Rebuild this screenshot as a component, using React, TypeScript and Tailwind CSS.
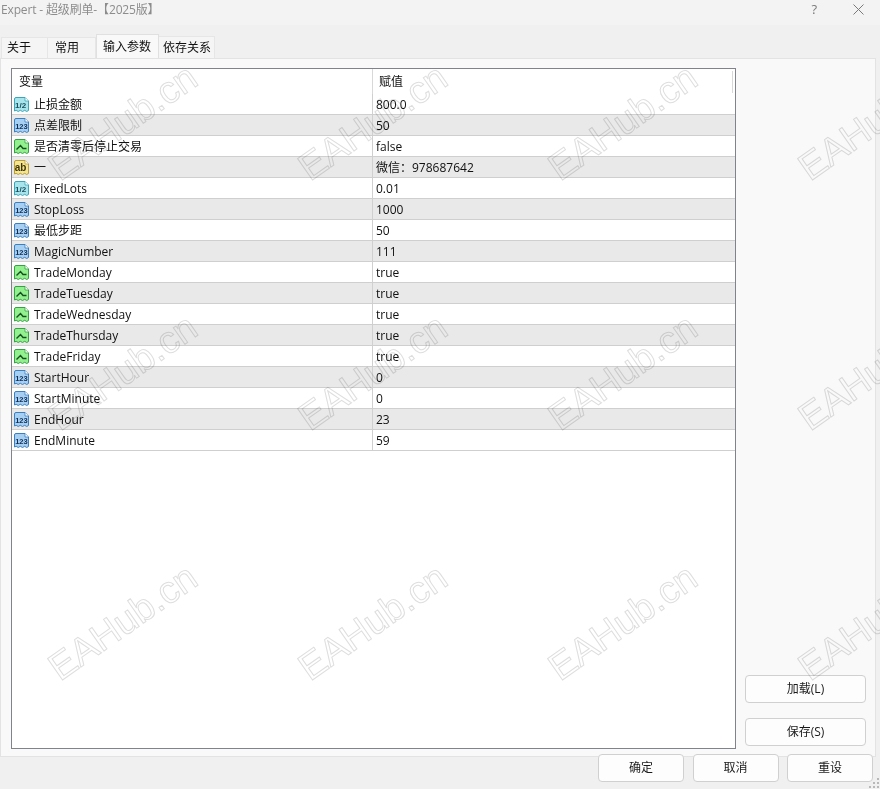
import React from "react";

const font = "font-['Open_Sans','Noto_Sans_CJK_SC',sans-serif]";

type Kind = "half" | "int" | "bool" | "str";

const rows: { icon: Kind; name: string; value: string }[] = [
  { icon: "half", name: "止损金额", value: "800.0" },
  { icon: "int", name: "点差限制", value: "50" },
  { icon: "bool", name: "是否清零后停止交易", value: "false" },
  { icon: "str", name: "一", value: "微信：978687642" },
  { icon: "half", name: "FixedLots", value: "0.01" },
  { icon: "int", name: "StopLoss", value: "1000" },
  { icon: "int", name: "最低步距", value: "50" },
  { icon: "int", name: "MagicNumber", value: "111" },
  { icon: "bool", name: "TradeMonday", value: "true" },
  { icon: "bool", name: "TradeTuesday", value: "true" },
  { icon: "bool", name: "TradeWednesday", value: "true" },
  { icon: "bool", name: "TradeThursday", value: "true" },
  { icon: "bool", name: "TradeFriday", value: "true" },
  { icon: "int", name: "StartHour", value: "0" },
  { icon: "int", name: "StartMinute", value: "0" },
  { icon: "int", name: "EndHour", value: "23" },
  { icon: "int", name: "EndMinute", value: "59" },
];

const palette = {
  half: { fill: "#a8e4ec", stroke: "#3aa5b8", ink: "#17505e" },
  int: { fill: "#a6cff2", stroke: "#3a7fc0", ink: "#0f2f58" },
  bool: { fill: "#93f08e", stroke: "#35a045", ink: "#14501f" },
  str: { fill: "#f5e590", stroke: "#b89c35", ink: "#3f3608" },
};

const TypeIcon = ({ kind }: { kind: Kind }) => {
  const c = palette[kind];
  return (
    <svg width="17" height="17" viewBox="0 0 17 17" className="shrink-0">
      <path
        d="M1.5 3Q1.5 1.5 3 1.5H12L15.5 5V14.5L13.7 15.5L11.7 14.3L9.5 15.5L7.3 14.3L5.2 15.5L3.2 14.3L1.5 15Z"
        fill={c.fill}
        stroke={c.stroke}
        strokeWidth="1"
      />
      <path d="M12 1.5V5H15.5" fill="#ffffff" stroke={c.stroke} strokeWidth="0.8" />
      {kind === "bool" ? (
        <path d="M3.5 11.5L7.5 7.5L10 10.5H13.5" fill="none" stroke={c.ink} strokeWidth="1.4" />
      ) : (
        <text
          x={kind === "int" ? 8.4 : 7.6}
          y="11.8"
          textAnchor="middle"
          fontSize={kind === "str" ? 10 : kind === "int" ? 7.5 : 8}
          fontWeight={700}
          fontFamily="Liberation Sans, sans-serif"
          fill={c.ink}
        >
          {kind === "half" ? "1/2" : kind === "int" ? "123" : "ab"}
        </text>
      )}
    </svg>
  );
};

const Button = ({ label, className }: { label: string; className: string }) => (
  <button className={`h-[28px] rounded-[4px] border border-[#d0d0d0] bg-[#fdfdfd] text-[12px] text-[#1a1a1a] ${className}`}>
    {label}
  </button>
);

const Watermarks = () => {
  const spots = [
    "left-[37px] top-[97px]",
    "left-[287px] top-[97px]",
    "left-[537px] top-[97px]",
    "left-[787px] top-[97px]",
    "left-[37px] top-[347px]",
    "left-[287px] top-[347px]",
    "left-[537px] top-[347px]",
    "left-[787px] top-[347px]",
    "left-[37px] top-[597px]",
    "left-[287px] top-[597px]",
    "left-[537px] top-[597px]",
    "left-[787px] top-[597px]",
  ];
  return (
    <>
      {spots.map((spot) => (
        <div
          key={spot}
          className={`pointer-events-none absolute ${spot} origin-center -rotate-[35deg] whitespace-nowrap font-['Liberation_Sans',sans-serif] text-[38px] leading-[50px] text-transparent mix-blend-multiply [-webkit-text-stroke:1px_#dedede]`}
        >
          EAHub.cn
        </div>
      ))}
    </>
  );
};

export default function App() {
  return (
    <div className={`relative h-[789px] w-[880px] overflow-hidden bg-[#f0f0f0] text-[12px] text-[#111111] ${font}`}>
      {/* Title bar */}
      <div className="flex h-[25px] items-center justify-between bg-[#f3f3f3] pb-[6px] pl-[1px] pr-[16px]">
        <span className="text-[12px] tracking-[-0.15px] text-[#8c8c8c]">Expert - 超级刷单-【2025版】</span>
        <div className="flex items-center gap-[36px] text-[#7a7a7a]">
          <span className="text-[13px]">?</span>
          <svg width="11" height="11" viewBox="0 0 11 11">
            <path d="M0.5 0.5L10.5 10.5M10.5 0.5L0.5 10.5" stroke="#7a7a7a" strokeWidth="1" />
          </svg>
        </div>
      </div>

      {/* Tabs */}
      <div className="flex h-[33px] items-end pl-[1px]">
        <div className="flex h-[21px] w-[47px] items-center border border-b-0 border-[#e6e6e6] bg-[#f5f5f5] pl-[5px]">关于</div>
        <div className="flex h-[21px] w-[48px] items-center border-y border-r border-b-0 border-[#e6e6e6] bg-[#f5f5f5] pl-[7px]">常用</div>
        <div className="flex h-[24px] w-[63px] items-center border border-b-0 border-[#e0e0e0] bg-[#f9f9f9] pl-[6px]">输入参数</div>
        <div className="flex h-[22px] w-[56px] items-center border-y border-r border-b-0 border-[#e6e6e6] bg-[#f5f5f5] pl-[4px]">依存关系</div>
      </div>

      {/* Panel */}
      <div className="flex h-[699px] w-[876px] gap-[9px] border border-[#e3e3e3] bg-[#f9f9f9] pb-[7px] pl-[10px] pr-[8px] pt-[9px]">
        <div className="h-[681px] w-[725px] border border-[#7f838a] bg-white">
          <div className="flex h-[25px] items-center">
            <div className="h-full w-[361px] border-r border-[#d8d8d8] pl-[7px] leading-[25px]">变量</div>
            <div className="flex-1 pl-[6px]">赋值</div>
            <div className="mr-[2px] h-[22px] w-px bg-[#d8d8d8]" />
          </div>
          {rows.map((row, i) => (
            <div
              key={row.name}
              className={`flex h-[21px] border-b border-[#cfcfcf] ${i % 2 === 1 ? "bg-[#e9e9e9]" : "bg-white"}`}
            >
              <div className="flex h-full w-[361px] items-center gap-[4px] border-r border-[#d0d0d0] pl-[1px] pt-[1px]">
                <TypeIcon kind={row.icon} />
                <span>{row.name}</span>
              </div>
              <div className="flex flex-1 items-center pl-[3px] pt-[1px]">{row.value}</div>
            </div>
          ))}
        </div>
        <div className="flex flex-1 flex-col items-stretch justify-end gap-[15px] pb-[3px]">
          <Button label="加载(L)" className="w-[121px]" />
          <Button label="保存(S)" className="w-[121px]" />
        </div>
      </div>

      {/* Bottom buttons */}
      <div className="absolute left-[598px] top-[754px] flex gap-[8.5px]">
        <Button label="确定" className="w-[86px]" />
        <Button label="取消" className="w-[86px]" />
        <Button label="重设" className="w-[86px]" />
      </div>

      {/* Size grip */}
      <svg width="12" height="12" viewBox="0 0 12 12" className="absolute bottom-0 right-0">
        <path d="M9 1h2v2H9zM5 5h2v2H5zM9 5h2v2H9zM1 9h2v2H1zM5 9h2v2H5zM9 9h2v2H9z" fill="#b8b8b8" />
      </svg>

      <Watermarks />
    </div>
  );
}
